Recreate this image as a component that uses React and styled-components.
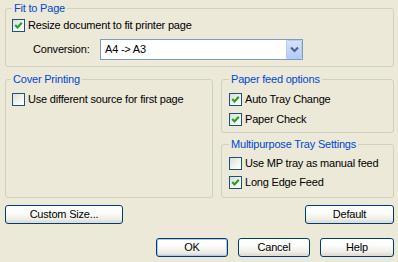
import React from "react";
import styled, { createGlobalStyle } from "styled-components";

const Global = createGlobalStyle`
  html, body { margin: 0; padding: 0; background: #ECE9D8; }
  body { font-family: "Liberation Sans", Arial, sans-serif; font-size: 11px; color: #000; }
  * { box-sizing: border-box; }
`;

const Dialog = styled.div`
  width: 398px;
  height: 262px;
  padding: 2px 4px 0 5px;
  display: flex;
  flex-direction: column;
  background: #ECE9D8;
  letter-spacing: -0.2px;
  line-height: 13px;
`;

const Group = styled.fieldset`
  margin: 0;
  padding: 0;
  min-width: 0;
  border: 1px solid #D0D0BF;
  border-radius: 3px;
`;

const Legend = styled.legend`
  margin-left: ${(p) => p.$offset ?? 6}px;
  padding: 0 2px;
  color: #0046D5;
  font-size: 11px;
  line-height: 13px;
`;

const GroupBody = styled.div`
  display: flex;
  flex-direction: column;
  gap: ${(p) => p.$gap ?? 7}px;
  padding: ${(p) => p.$pad};
`;

const CheckRow = styled.label`
  display: flex;
  align-items: center;
  gap: 3px;
  height: 13px;
  white-space: nowrap;
`;

const Box = styled.span`
  width: 13px;
  height: 13px;
  flex: none;
  border: 1px solid #1C5180;
  background: linear-gradient(135deg, #DCDCD7 0%, #F3F3EF 55%, #FFFFFF 100%);
  display: flex;
  align-items: center;
  justify-content: center;
`;

const Check = ({ checked, label }) => (
  <CheckRow>
    <Box>
      {checked && (
        <svg width="11" height="11" viewBox="0 0 11 11">
          <polyline points="2.2,5 4.5,7.4 8.8,2.8" fill="none" stroke="#21A121" strokeWidth="2.1" />
        </svg>
      )}
    </Box>
    <span>{label}</span>
  </CheckRow>
);

const FieldRow = styled.div`
  display: flex;
  align-items: center;
  padding-left: 21px;
`;

const FieldLabel = styled.span`
  width: 67px;
  flex: none;
`;

const SelectBox = styled.div`
  width: 203px;
  height: 21px;
  border: 1px solid #7F9DB9;
  background: #fff;
  display: flex;
  align-items: center;
  justify-content: space-between;
  padding: 0 0 0 4px;
`;

const DropButton = styled.span`
  width: 16px;
  height: 19px;
  border: 1px solid #B7CBF6;
  border-radius: 1px;
  background: linear-gradient(180deg, #D6E3FE 0%, #C3D5FD 50%, #B4CAF9 100%);
  display: flex;
  align-items: center;
  justify-content: center;
`;

const Columns = styled.div`
  display: grid;
  grid-template-columns: 208px 1fr;
  column-gap: 8px;
  margin-top: 6px;
`;

const RightColumn = styled.div`
  display: flex;
  flex-direction: column;
  gap: 5px;
`;

const ButtonRow = styled.div`
  display: flex;
  justify-content: ${(p) => p.$justify};
  gap: 10px;
  margin-top: ${(p) => p.$top}px;
`;

const Button = styled.button`
  width: ${(p) => p.$w}px;
  height: 19px;
  padding: 0;
  font: inherit;
  letter-spacing: inherit;
  line-height: 13px;
  color: #000;
  border: 1px solid #003C74;
  border-radius: 3px;
  background: linear-gradient(180deg, #FFFFFF 0%, #FBFBF9 40%, #EEEDE7 78%, #D9D4C9 100%);
  box-shadow: ${(p) => (p.$default ? "inset 0 0 0 1px #AFC6F3" : "inset 0 -1px 0 #E2DED3")};
`;

export default function App() {
  return (
    <>
      <Global />
      <Dialog>
        <Group>
          <Legend $offset={6}>Fit to Page</Legend>
          <GroupBody $pad="4px 0 6px 6px" $gap={7}>
            <Check checked label="Resize document to fit printer page" />
            <FieldRow>
              <FieldLabel>Conversion:</FieldLabel>
              <SelectBox>
                <span>A4 -&gt; A3</span>
                <DropButton>
                  <svg width="9" height="7" viewBox="0 0 9 7">
                    <polyline points="1,1.5 4.5,5 8,1.5" fill="none" stroke="#4D6185" strokeWidth="2" />
                  </svg>
                </DropButton>
              </SelectBox>
            </FieldRow>
          </GroupBody>
        </Group>

        <Columns>
          <Group>
            <Legend $offset={5}>Cover Printing</Legend>
            <GroupBody $pad="7px 0 0 6px">
              <Check label="Use different source for first page" />
            </GroupBody>
          </Group>
          <RightColumn>
            <Group>
              <Legend $offset={7}>Paper feed options</Legend>
              <GroupBody $pad="7px 0 6px 7px" $gap={7}>
                <Check checked label="Auto Tray Change" />
                <Check checked label="Paper Check" />
              </GroupBody>
            </Group>
            <Group>
              <Legend $offset={7}>Multipurpose Tray Settings</Legend>
              <GroupBody $pad="6px 0 8px 7px" $gap={6}>
                <Check label="Use MP tray as manual feed" />
                <Check checked label="Long Edge Feed" />
              </GroupBody>
            </Group>
          </RightColumn>
        </Columns>

        <ButtonRow $justify="space-between" $top={7}>
          <Button $w={118}>Custom Size...</Button>
          <Button $w={89}>Default</Button>
        </ButtonRow>
        <ButtonRow $justify="flex-end" $top={14}>
          <Button $w={72} $default>OK</Button>
          <Button $w={72}>Cancel</Button>
          <Button $w={74}>Help</Button>
        </ButtonRow>
      </Dialog>
    </>
  );
}
